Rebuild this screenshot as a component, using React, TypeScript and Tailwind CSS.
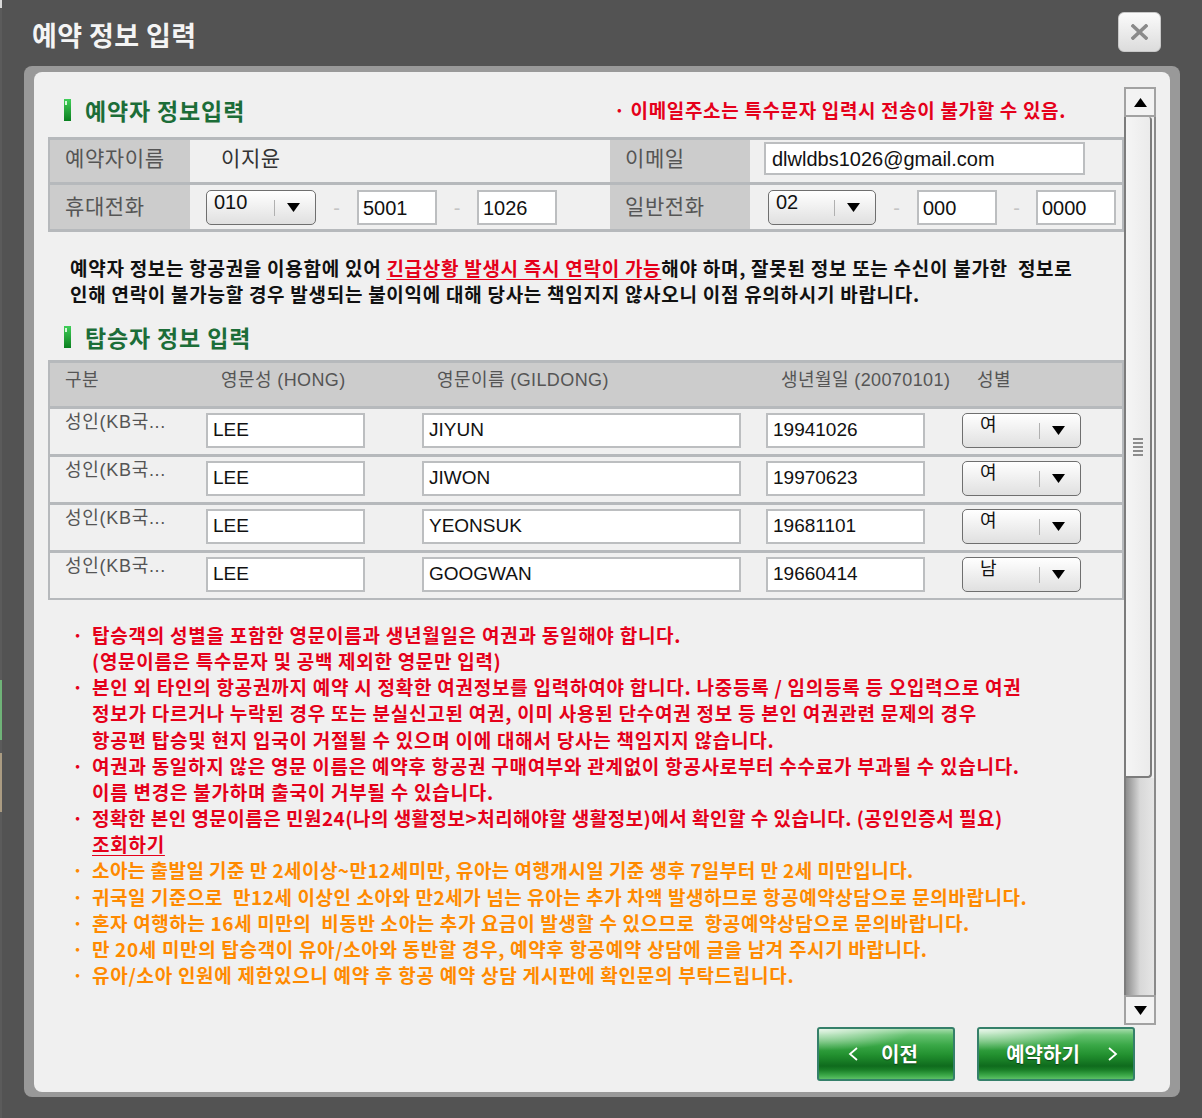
import React from "react";

const LAT = "font-['Liberation_Sans','Noto_Sans_CJK_KR',sans-serif]";

function Tri({ up = false }: { up?: boolean }) {
  return (
    <svg width="13" height="9" viewBox="0 0 13 9">
      <polygon points={up ? "6.5,0 13,9 0,9" : "0,0 13,0 6.5,9"} fill="#000" />
    </svg>
  );
}

function Select({ value, className, textCls }: { value: string; className: string; textCls: string }) {
  return (
    <div
      className={`flex items-center rounded-[5px] border-[1.5px] border-[#6f6f6f] bg-gradient-to-b from-[#ffffff] to-[#e0e0e0] ${className}`}
    >
      <span className={`flex-1 self-start leading-[22px] text-[#111] ${textCls}`}>{value}</span>
      <span className="h-[16px] w-px bg-[#b0b0b0]" />
      <span className="ml-[12px] mr-[15px] flex">
        <Tri />
      </span>
    </div>
  );
}

function Box({ value, className }: { value: string; className: string }) {
  return (
    <div className={`flex items-center border-2 border-[#bcbec0] bg-white text-[#111] ${className}`}>
      {value}
    </div>
  );
}

function Dash({ w }: { w: string }) {
  return <span className={`flex h-[35px] items-center justify-center text-[20px] text-[#c4c4c4] ${w}`}>-</span>;
}

function SectionTitle({ children }: { children: React.ReactNode }) {
  return (
    <div className="flex items-center pl-[16px]">
      <span className="relative h-[22px] w-[7px] bg-gradient-to-b from-[#3fcf58] to-[#08801f]">
        <span className="absolute left-[1px] top-[2px] h-[4px] w-[2px] bg-[#d6f7da]" />
      </span>
      <span className="ml-[14px] text-[23px] font-bold leading-[28px] tracking-[0.85px] text-[#1c6d38]">{children}</span>
    </div>
  );
}

function GreenButton({ children, className }: { children: React.ReactNode; className: string }) {
  return (
    <button
      className={`relative flex h-[54px] items-center justify-center overflow-hidden rounded-[3px] border-2 border-[#35806a] bg-[linear-gradient(to_bottom,#a6dcab_0%,#66c271_12%,#3aa847_32%,#22902f_52%,#0f6b1d_74%,#1a7f28_82%,#3aa646_92%,#5cc066_100%)] text-[20px] font-bold text-white [text-shadow:0_1px_1px_rgba(0,0,0,0.45)] ${className}`}
    >
      <span className="absolute left-0 top-0 h-[22px] w-[70%] bg-[radial-gradient(ellipse_at_top_left,rgba(255,255,255,0.75),rgba(255,255,255,0)_70%)]" />
      {children}
    </button>
  );
}

function Chevron({ right = false }: { right?: boolean }) {
  return (
    <svg width="11" height="14" viewBox="0 0 11 14" className="relative">
      <polyline
        points={right ? "2,1 9,7 2,13" : "9,1 2,7 9,13"}
        fill="none"
        stroke="#fff"
        strokeWidth="1.8"
      />
    </svg>
  );
}

function Scrollbar() {
  return (
    <div className="flex w-[32px] flex-col">
      <div className="flex h-[30px] items-center justify-center border-2 border-[#a2a2a2] bg-[#f3f3f3]">
        <Tri up />
      </div>
      <div className="flex flex-1">
        <div className="flex w-[30px] flex-col">
          <div className="flex h-[661px] w-[28px] items-center justify-center rounded-br-[4px] rounded-tr-[3px] border-x-2 border-b-2 border-[#7c7c7c] bg-gradient-to-r from-[#f5f5f5] to-[#ebebeb]">
            <div className="flex flex-col gap-[2px]">
              <span className="h-[2px] w-[10px] bg-[#8c8c8c]" />
              <span className="h-[2px] w-[10px] bg-[#8c8c8c]" />
              <span className="h-[2px] w-[10px] bg-[#8c8c8c]" />
              <span className="h-[2px] w-[10px] bg-[#8c8c8c]" />
              <span className="h-[2px] w-[10px] bg-[#8c8c8c]" />
            </div>
          </div>
          <div className="flex-1 border-l-2 border-[#7c7c7c] bg-gradient-to-r from-[#8e8e8e] via-[#d8d8d8] to-[#e6e6e6]" />
        </div>
        <div className="w-[2px] bg-[#8a8a8a]" />
      </div>
      <div className="flex h-[30px] items-center justify-center border-2 border-[#a2a2a2] bg-[#f3f3f3]">
        <Tri />
      </div>
    </div>
  );
}

const passengers = [
  { last: "LEE", first: "JIYUN", birth: "19941026", g: "여" },
  { last: "LEE", first: "JIWON", birth: "19970623", g: "여" },
  { last: "LEE", first: "YEONSUK", birth: "19681101", g: "여" },
  { last: "LEE", first: "GOOGWAN", birth: "19660414", g: "남" },
];

type Note = { b: boolean; t: string; o?: boolean; u?: boolean; tr: string };
const notes: Note[] = [
  { b: true, tr: "tracking-[0.75px]", t: "탑승객의 성별을 포함한 영문이름과 생년월일은 여권과 동일해야 합니다." },
  { b: false, tr: "tracking-[0.7px]", t: "(영문이름은 특수문자 및 공백 제외한 영문만 입력)" },
  { b: true, tr: "tracking-[0.75px]", t: "본인 외 타인의 항공권까지 예약 시 정확한 여권정보를 입력하여야 합니다. 나중등록 / 임의등록 등 오입력으로 여권" },
  { b: false, tr: "tracking-[0.75px]", t: "정보가 다르거나 누락된 경우 또는 분실신고된 여권, 이미 사용된 단수여권 정보 등 본인 여권관련 문제의 경우" },
  { b: false, tr: "tracking-[0.75px]", t: "항공편 탑승및 현지 입국이 거절될 수 있으며 이에 대해서 당사는 책임지지 않습니다." },
  { b: true, tr: "tracking-[0.72px]", t: "여권과 동일하지 않은 영문 이름은 예약후 항공권 구매여부와 관계없이 항공사로부터 수수료가 부과될 수 있습니다." },
  { b: false, tr: "tracking-[0.75px]", t: "이름 변경은 불가하며 출국이 거부될 수 있습니다." },
  { b: true, tr: "tracking-[0.48px]", t: "정확한 본인 영문이름은 민원24(나의 생활정보>처리해야할 생활정보)에서 확인할 수 있습니다. (공인인증서 필요)" },
  { b: false, tr: "tracking-[0.75px]", t: "조회하기", u: true },
  { b: true, o: true, tr: "tracking-[0.45px]", t: "소아는 출발일 기준 만 2세이상~만12세미만, 유아는 여행개시일 기준 생후 7일부터 만 2세 미만입니다." },
  { b: true, o: true, tr: "tracking-[0.56px]", t: "귀국일 기준으로  만12세 이상인 소아와 만2세가 넘는 유아는 추가 차액 발생하므로 항공예약상담으로 문의바랍니다." },
  { b: true, o: true, tr: "tracking-[0.62px]", t: "혼자 여행하는 16세 미만의  비동반 소아는 추가 요금이 발생할 수 있으므로  항공예약상담으로 문의바랍니다." },
  { b: true, o: true, tr: "tracking-[0.66px]", t: "만 20세 미만의 탑승객이 유아/소아와 동반할 경우, 예약후 항공예약 상담에 글을 남겨 주시기 바랍니다." },
  { b: true, o: true, tr: "tracking-[0.72px]", t: "유아/소아 인원에 제한있으니 예약 후 항공 예약 상담 게시판에 확인문의 부탁드립니다." },
];

const LABEL = "w-[140px] bg-[#cccccc] pl-[15px] text-[21px] leading-[24px] tracking-[0.6px] text-[#555]";

function Content() {
  return (
    <div className="w-[1076px] overflow-hidden">
      {/* Section 1 header */}
      <div className="flex h-[50px] items-center pb-[4px]">
        <SectionTitle>예약자 정보입력</SectionTitle>
        <span className="ml-auto mr-[58px] text-[19px] font-bold leading-[24px] tracking-[0.65px] text-[#e5001a]">
          · 이메일주소는 특수문자 입력시 전송이 불가할 수 있음.
        </span>
      </div>

      {/* Table 1 */}
      <div className="border-x-2 border-y-[3px] border-[#b6b9bc]">
        <div className="flex h-[42px]">
          <div className={`${LABEL} pt-[5px]`}>예약자이름</div>
          <div className="w-[420px] pl-[31px] pt-[5px] text-[21px] leading-[24px] tracking-[0.6px] text-[#333]">이지윤</div>
          <div className={`${LABEL} pt-[5px]`}>이메일</div>
          <div className={`w-[372px] pl-[14px] pt-[2px] ${LAT}`}>
            <Box value="dlwldbs1026@gmail.com" className="h-[33px] w-[321px] pl-[6px] text-[20px]" />
          </div>
        </div>
        <div className="h-[3px] bg-[#b6b9bc]" />
        <div className="flex h-[44px]">
          <div className={`${LABEL} pt-[8px]`}>휴대전화</div>
          <div className={`flex w-[420px] items-start pl-[16px] pt-[5px] ${LAT}`}>
            <Select value="010" className="h-[35px] w-[110px]" textCls="pl-[7px] text-[20px]" />
            <Dash w="w-[41px]" />
            <Box value="5001" className="h-[35px] w-[80px] pl-[4px] text-[20px]" />
            <Dash w="w-[40px]" />
            <Box value="1026" className="h-[35px] w-[80px] pl-[4px] text-[20px]" />
          </div>
          <div className={`${LABEL} pt-[8px]`}>일반전화</div>
          <div className={`flex w-[372px] items-start pl-[18px] pt-[5px] ${LAT}`}>
            <Select value="02" className="h-[35px] w-[108px]" textCls="pl-[7px] text-[20px]" />
            <Dash w="w-[41px]" />
            <Box value="000" className="h-[35px] w-[80px] pl-[4px] text-[20px]" />
            <Dash w="w-[39px]" />
            <Box value="0000" className="h-[35px] w-[80px] pl-[4px] text-[20px]" />
          </div>
        </div>
      </div>

      {/* Paragraph */}
      <div className="mt-[23px] whitespace-pre pl-[22px] text-[19px] font-bold leading-[26px] tracking-[0.72px] text-[#111]">
        <div>
          예약자 정보는 항공권을 이용함에 있어{" "}
          <span className="text-[#e5001a] underline underline-offset-[3px]">긴급상황 발생시 즉시 연락이 가능</span>
          해야 하며, 잘못된 정보 또는 수신이 불가한  정보로
        </div>
        <div>인해 연락이 불가능할 경우 발생되는 불이익에 대해 당사는 책임지지 않사오니 이점 유의하시기 바랍니다.</div>
      </div>

      {/* Section 2 header */}
      <div className="mt-[7px] flex h-[46px] items-center">
        <SectionTitle>탑승자 정보 입력</SectionTitle>
      </div>

      {/* Table 2 */}
      <div className={`border-x-2 border-b-2 border-t-[3px] border-[#b6b9bc] ${LAT}`}>
        <div className="grid h-[43px] grid-cols-[156px_216px_344px_196px_160px] bg-[#cccccc] text-[18px] leading-[24px] tracking-[0.4px] text-[#555]">
          <div className="pl-[15px] pt-[5px]">구분</div>
          <div className="pl-[15px] pt-[5px]">영문성 (HONG)</div>
          <div className="pl-[15px] pt-[5px]">영문이름 (GILDONG)</div>
          <div className="pl-[15px] pt-[5px]">생년월일 (20070101)</div>
          <div className="pl-[15px] pt-[5px]">성별</div>
        </div>
        {passengers.map((p, i) => (
          <React.Fragment key={i}>
            <div className="h-[3px] bg-[#b6b9bc]" />
            <div className="grid h-[45px] grid-cols-[156px_216px_344px_196px_160px]">
              <div className="pl-[15px] pt-[1px] text-[18px] leading-[24px] tracking-[0.7px] text-[#555]">성인(KB국...</div>
              <div className="pt-[4px]">
                <Box value={p.last} className="h-[35px] w-[159px] pl-[5px] text-[19px]" />
              </div>
              <div className="pt-[4px]">
                <Box value={p.first} className="h-[35px] w-[319px] pl-[5px] text-[19px]" />
              </div>
              <div className="pt-[4px]">
                <Box value={p.birth} className="h-[35px] w-[159px] pl-[5px] text-[19px]" />
              </div>
              <div className="pt-[4px]">
                <Select value={p.g} className="h-[35px] w-[119px]" textCls="pl-[17px] text-[18px]" />
              </div>
            </div>
          </React.Fragment>
        ))}
      </div>

      {/* Notes */}
      <div className="mt-[22px] pl-[24px] text-[19px] font-bold leading-[26.15px]">
        {notes.map((n, i) => (
          <div key={i} className={`flex whitespace-pre ${n.tr} ${n.o ? "text-[#ff8a00]" : "text-[#e5001a]"}`}>
            <span className="w-[20px]">{n.b ? "·" : ""}</span>
            <span className={n.u ? "underline underline-offset-[3px]" : ""}>{n.t}</span>
          </div>
        ))}
      </div>
    </div>
  );
}

export default function App() {
  return (
    <div className="flex h-[1118px] w-[1202px] overflow-hidden bg-[#535353] font-['Noto_Sans_CJK_KR',sans-serif]">
      <div className="flex w-[2px] flex-col bg-[#5b5b5b]">
        <div className="h-[8px] bg-[#d9d9d9]" />
        <div className="h-[672px]" />
        <div className="h-[60px] bg-[#6fb378]" />
        <div className="h-[13px]" />
        <div className="h-[59px] bg-[#ab9c82]" />
      </div>
      <div className="flex flex-1 flex-col bg-[#535353]">
        <div className="flex h-[66px] items-start justify-between">
          <h1 className="pl-[30px] pt-[20px] text-[27px] font-bold leading-[30px] tracking-[0.4px] text-[#f4f4f4]">예약 정보 입력</h1>
          <button className="mr-[41px] mt-[12px] flex h-[40px] w-[43px] items-center justify-center rounded-[6px] border border-[#c8c8c8] bg-gradient-to-b from-[#fbfbfb] to-[#dcdcdc]">
            <svg width="17" height="16" viewBox="0 0 17 16">
              <path d="M2 2 L15 14 M15 2 L2 14" stroke="#8a8a8a" strokeWidth="3.6" strokeLinecap="square" />
            </svg>
          </button>
        </div>
        <div className="ml-[22px] h-[1031px] w-[1156px] rounded-[8px] bg-[#999999] px-[10px] pb-[5px] pt-[6px]">
          <div className="flex h-full flex-col rounded-[8px] bg-[#f0f0f0] pt-[15px]">
            <div className="ml-[14px] flex h-[938px] w-[1108px]">
              <Content />
              <Scrollbar />
            </div>
            <div className="mt-[2px] flex justify-end gap-[22px] pr-[35px]">
              <GreenButton className="w-[138px] gap-[22px] pr-[6px]">
                <Chevron />
                <span className="relative">이전</span>
              </GreenButton>
              <GreenButton className="w-[158px] gap-[27px] pl-[12px]">
                <span className="relative">예약하기</span>
                <Chevron right />
              </GreenButton>
            </div>
          </div>
        </div>
      </div>
    </div>
  );
}
